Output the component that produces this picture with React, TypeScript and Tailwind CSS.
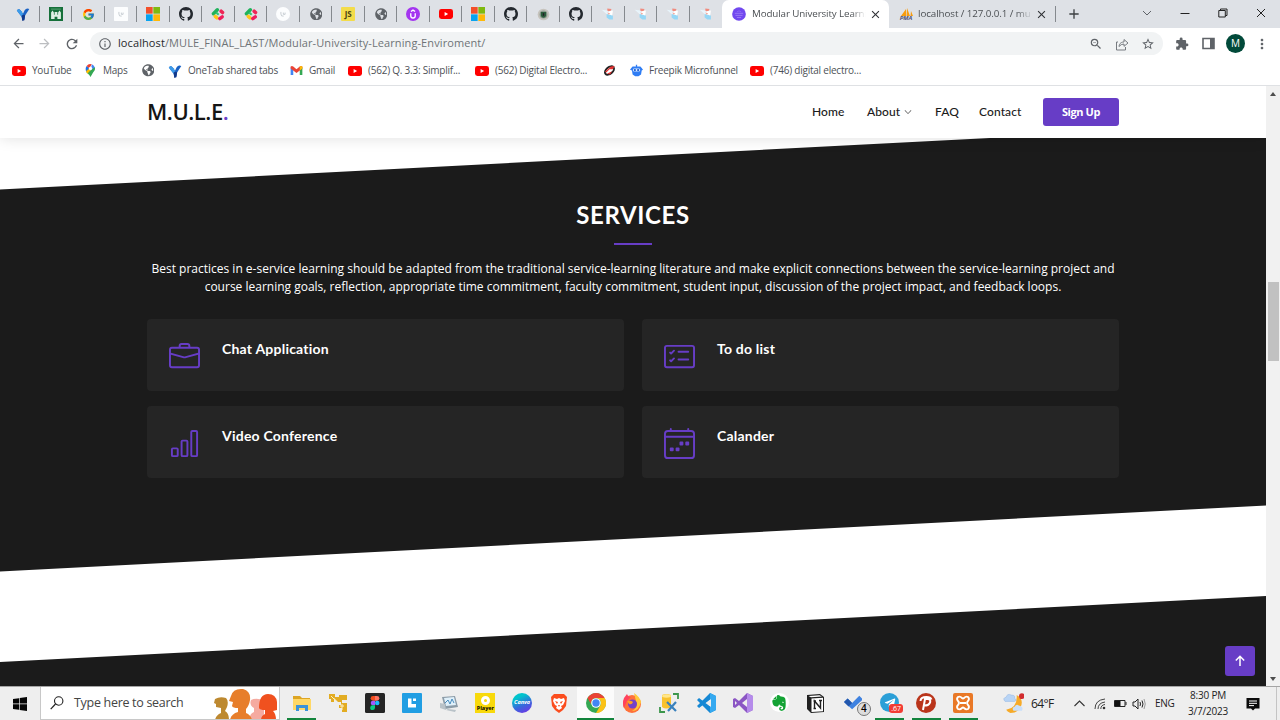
import React from "react";
import { BsBriefcase, BsCardChecklist, BsBarChart, BsCalendar4Week, BsChevronDown, BsGithub } from "react-icons/bs";
import { FcGoogle } from "react-icons/fc";
import { FaGlobeAmericas, FaEvernote, FaTelegramPlane } from "react-icons/fa";
import { MdZoomOut, MdStarBorder, MdExtension, MdOutlineInfo, MdArrowBack, MdArrowForward, MdRefresh, MdMoreVert, MdClose, MdAdd } from "react-icons/md";

const S = ({ s = 14, v = "0 0 20 20", children }: { s?: number; v?: string; children: React.ReactNode }) => (
  <svg width={s} height={s} viewBox={v} className="block shrink-0">{children}</svg>
);

const OneTab = () => (
  <S>
    <path d="M2 4c2-1.500 4-.5 5 1.500l3 4 2-4C13 3 16 1 19 3l-6 9-1 6-3 1-1-5-6-8z" fill="#1b62c4" />
    <path d="M1 5l3-2 4 3 2 4-2 4z" fill="#3d9be9" />
    <path d="M8 12l4-1 1 1-1 7-3 1z" fill="#12398a" />
  </S>
);
const Castle = () => (
  <S>
    <rect width="20" height="20" fill="#16703a" />
    <path d="M3 17V8l2-3 2 3v3h1V7h4v4h1V8l2-3 2 3v9h-5v-3H8v3z" fill="#dff0e4" />
    <path d="M3 3h14" stroke="#74b78c" />
  </S>
);
const Globe = () => <FaGlobeAmericas size={12.500} color="#5f6368" />;
const Faint = ({ round = false }: { round?: boolean }) => (
  <S>
    <rect width="20" height="20" rx={round ? 10 : 1} fill="#fcfdfe" />
    <path d="M7 7v3q0 4 4 3M10.500 8v2.500h2.500V8" stroke="#b4bcc3" fill="none" />
  </S>
);
const Microsoft = () => (
  <S>
    <path d="M0 0h9.500v9.500H0z" fill="#f3502b" /><path d="M10.500 0H20v9.500h-9.500z" fill="#7fba10" />
    <path d="M0 10.500h9.500V20H0z" fill="#08a3ef" /><path d="M10.500 10.500H20V20h-9.500z" fill="#feb909" />
  </S>
);
const Petals = () => (
  <S>
    <g strokeWidth="5" strokeLinecap="round">
      <path d="M3.500 9.500L9 4" stroke="#20b25c" /><path d="M14.500 6l2 2" stroke="#ee2656" />
      <path d="M6 13.500l2.500 2" stroke="#ffc61c" /><path d="M12.500 16.500l3.500-2.500" stroke="#f01d5c" />
    </g>
    <path d="M7.500 8l3.500 3" stroke="#31c871" strokeWidth="3" />
  </S>
);
const Js = () => (
  <span className="flex h-[14px] w-[14px] items-center justify-center rounded-[1px] bg-[#f3dc4b] text-[8px] font-bold text-[#4b4415]">JS</span>
);
const Udemy = () => (
  <S>
    <circle cx="10" cy="10" r="10" fill="#a435f0" />
    <path d="M6.800 9v3.500a3.200 3.200 0 006.400 0V9M7 6.500l3-2 3 2" stroke="#fff" strokeWidth="1.900" fill="none" />
  </S>
);
const YouTube = () => (
  <S v="0 0 20 20">
    <rect y="3" width="20" height="14" rx="3.500" fill="#f00" /><path d="M8 7l5 3-5 3z" fill="#fff" />
  </S>
);
const Emblem = () => (
  <S s={13}>
    <circle cx="10" cy="10" r="9" fill="#c6c3bd" /><circle cx="10" cy="10" r="6" fill="#8c9c8e" />
    <path d="M6 6h8v6q-1 3-4 3-3 0-4-3z" fill="#2b5b3a" /><path d="M9 8h2v4H9z" fill="#251d25" />
  </S>
);
const Bird = () => (
  <S>
    <path d="M1 4l8 1 3 4-3 2z" fill="#e8f4fb" /><path d="M8 10l9 2v6h-5l-4-3z" fill="#95d7f6" />
    <path d="M9 2l6 1-2 4-4-2z" fill="#f08b7e" /><path d="M11 6l6-1-1 7-6-2z" fill="#fff" /><path d="M9 8l4 1-2 2z" fill="#f3a99d" />
  </S>
);
const Mule = () => (
  <S>
    <circle cx="10" cy="10" r="9.800" fill="#7148ef" />
    <path d="M4 9h12M5 12h10M7 15h6" stroke="#a98df8" /><path d="M7 7l3-1.500L13 7" stroke="#9472f5" fill="none" />
  </S>
);
const Pma = () => (
  <span className="flex w-[14px] flex-col items-center">
    <svg width="13" height="8" viewBox="0 0 13 8"><path d="M1 8L6 1v7zM6.500 8L7 0l3 8zM10.500 8L11 3l2 5z" fill="#f89c0e" /></svg>
    <span className="text-[6px] font-bold italic leading-[5px] text-[#4f5379]">PMA</span>
  </span>
);

const pinned = [
  <OneTab />, <Castle />, <FcGoogle size={13} />, <Faint />, <Microsoft />, <BsGithub size={14} color="#24292f" />, <Petals />, <Petals />,
  <Faint round />, <Globe />, <Js />, <Globe />, <Udemy />, <YouTube />, <Microsoft />, <BsGithub size={14} color="#24292f" />, <Emblem />,
  <BsGithub size={14} color="#24292f" />, <Bird />, <Bird />, <Bird />, <Bird />,
];

const TabStrip = () => (
  <div className="flex h-[28px] items-stretch bg-[#dee1e6] pl-[7px] text-[9.800px]">
    {pinned.map((icon, i) => (
      <div key={i} className={`flex w-[32.500px] shrink-0 items-center justify-center ${i < 21 ? "bg-[linear-gradient(#85898e,#85898e)] bg-[length:1px_16px] bg-[position:right_6px] bg-no-repeat" : ""}`}>
        {icon}
      </div>
    ))}
    <div className="flex w-[167px] shrink-0 items-center rounded-t-[7px] bg-white pl-[10px]">
      <Mule />
      <span className="ml-[6px] w-[116px] whitespace-nowrap bg-[linear-gradient(90deg,#45494d_86%,#fff_98%)] bg-clip-text tracking-[-0.120px] text-transparent">Modular University Learni</span>
      <MdClose size={13} className="ml-px shrink-0 text-[#303236]" />
    </div>
    <div className="flex w-[167px] shrink-0 items-center bg-[linear-gradient(#85898e,#85898e)] bg-[length:1px_16px] bg-[position:right_6px] bg-no-repeat pl-[10px]">
      <Pma />
      <span className="ml-[5px] w-[117px] whitespace-nowrap bg-[linear-gradient(90deg,#45494d_84%,#dee1e6_98%)] bg-clip-text tracking-[-0.080px] text-transparent">localhost / 127.0.0.1 / mu</span>
      <MdClose size={13} className="ml-0 shrink-0 text-[#303236]" />
    </div>
    <div className="flex w-[36px] items-center justify-center"><MdAdd size={16} className="text-[#3c4043]" /></div>
    <div className="ml-auto flex items-center pb-[3px]">
      <div className="flex w-[38px] justify-center"><S s={10} v="0 0 10 10"><path d="M1 3l4 4 4-4" stroke="#5f6368" fill="none" /></S></div>
      <div className="flex w-[38px] justify-center"><S s={10} v="0 0 10 10"><path d="M0.500 5.500h9" stroke="#222" fill="none" /></S></div>
      <div className="flex w-[38px] justify-center"><S s={10} v="0 0 10 10"><path d="M.8 2.500h6.500v6.500H.8zM2.500 2.500V1h6.500v6.500H7.500" stroke="#222" fill="none" /></S></div>
      <div className="flex w-[38px] justify-center"><S s={10} v="0 0 10 10"><path d="M1 1l8 8M9 1L1 9" stroke="#222" fill="none" /></S></div>
    </div>
  </div>
);

const Toolbar = () => (
  <div className="flex h-[30px] items-center bg-white pl-[11px] pt-px text-[#5f6368]">
    <MdArrowBack size={15} />
    <MdArrowForward size={15} className="ml-[11px] text-[#bcbec1]" />
    <MdRefresh size={16} className="ml-[12px]" />
    <div className="ml-[10px] flex h-[23px] w-[1073px] items-center rounded-full bg-[#f1f3f4] pl-[8px] pr-[8px]">
      <MdOutlineInfo size={14} />
      <span className="ml-[6px] whitespace-nowrap text-[11px] tracking-[0.095px] text-[#6f7377]"><span className="text-[#26282b]">localhost</span>/MULE_FINAL_LAST/Modular-University-Learning-Enviroment/</span>
      <MdZoomOut size={14} className="ml-auto" />
      <span className="ml-[12px]">
        <S s={14} v="0 0 14 14"><path d="M3 5H1.500v8h9V10M4 9.500C4.500 6 6.500 5 9 5V2.500L13 6 9 9.300V7Q6 7 4 9.500z" stroke="#777b80" strokeWidth="1" fill="none" /></S>
      </span>
      <MdStarBorder size={14} className="ml-[12px]" />
    </div>
    <MdExtension size={14} className="ml-[12px]" />
    <span className="ml-[13px]"><S s={13} v="0 0 13 13"><path d="M1 1.500h11v10H1z" stroke="#5f6368" strokeWidth="1.600" fill="none" /><path d="M8 1h4v11H8z" fill="#5f6368" /></S></span>
    <span className="ml-[11px] flex h-[19px] w-[19px] items-center justify-center rounded-full bg-[#024a3a] text-[10px] text-white">M</span>
    <MdMoreVert size={16} className="ml-[9px]" />
  </div>
);

const Maps = () => (
  <S s={13} v="0 0 20 20">
    <path d="M4 3l6 5-6 5Q1 7 4 3z" fill="#1a73e8" /><path d="M4 3q3-4 8-2.500L8 7z" fill="#ea4335" />
    <path d="M12 .5q4 1.500 5 6l-7 6z" fill="#4285f4" /><path d="M4 13L17 5q1 4-3 8l-4 7q-2-4-6-7z" fill="#34a853" />
    <path d="M3 11l5-4 3 2-6 6z" fill="#fbbc04" /><circle cx="10" cy="7" r="2.600" fill="#fff" />
  </S>
);
const Gmail = () => (
  <S s={13} v="0 0 20 20">
    <path d="M1 5v12h4V9z" fill="#4285f4" /><path d="M19 5v12h-4V9z" fill="#34a853" />
    <path d="M1 7V4q2-2 4 0l5 4 5-4q2-2 4 0v3l-9 7z" fill="#ea4335" /><path d="M15 4q2-2 4 0v3l-4 3z" fill="#fbbc04" />
  </S>
);
const Swirl = () => (
  <S s={13} v="0 0 20 20">
    <ellipse cx="10" cy="10" rx="8" ry="5" transform="rotate(-40 10 10)" fill="#fff" stroke="#222" strokeWidth="3" />
    <path d="M3 12l9-8 6-1-3 5-5 0-5 5z" fill="#e23131" /><path d="M6 15l8-4-3 5z" fill="#e23131" />
  </S>
);
const Robot = () => (
  <S s={13} v="0 0 20 20">
    <path d="M9 1h2v3H9zM2 6l2-2h12l2 2 2 3-2 1-1 6-4 3H8l-4-3-1-6-3-1z" fill="#2f7df4" />
    <rect x="4.500" y="7" width="11" height="4.500" rx="2" fill="#d9e9ff" /><circle cx="7.500" cy="9.300" r="1.700" fill="#185bd0" /><circle cx="12.500" cy="9.300" r="1.700" fill="#185bd0" />
  </S>
);

const Mark = ({ icon, label, w }: { icon: React.ReactNode; label?: string; w: string }) => (
  <div className={`flex shrink-0 items-center gap-[6px] ${w}`}>
    <span className="flex w-[14px] justify-center">{icon}</span>
    {label && <span className="whitespace-nowrap">{label}</span>}
  </div>
);

const Bookmarks = () => (
  <div className="flex h-[28px] items-center border-b border-[#dfe1e4] bg-white pb-[2px] pl-[12px] text-[10px] tracking-[-0.230px] text-[#4d5156]">
    <Mark w="w-[71px]" icon={<YouTube />} label="YouTube" />
    <Mark w="w-[58px]" icon={<Maps />} label="Maps" />
    <Mark w="w-[27px]" icon={<Globe />} />
    <Mark w="w-[121px]" icon={<OneTab />} label="OneTab shared tabs" />
    <Mark w="w-[59px]" icon={<Gmail />} label="Gmail" />
    <Mark w="w-[127px]" icon={<YouTube />} label="(562) Q. 3.3: Simplif..." />
    <Mark w="w-[127px]" icon={<YouTube />} label="(562) Digital Electro..." />
    <Mark w="w-[27px]" icon={<Swirl />} />
    <Mark w="w-[121px]" icon={<Robot />} label="Freepik Microfunnel" />
    <Mark w="w-[120px]" icon={<YouTube />} label="(746) digital electro..." />
  </div>
);

const Header = () => (
  <header className="relative z-10 flex h-[52px] shrink-0 items-center bg-white pl-[147px] font-['Lato',sans-serif] text-[12px] font-medium tracking-[0.100px] text-[#1b1b1b] shadow-[0_0_14px_rgba(0,0,0,0.13)]">
    <h1 className="w-[665px] pb-[2px] font-['Open_Sans',sans-serif] text-[22px] font-semibold tracking-[-0.450px] text-[#151515]">M.U.L.E<span className="text-[#6a40c8]">.</span></h1>
    <a className="w-[55px]">Home</a>
    <a className="flex w-[68px] items-center gap-[4px]">About <BsChevronDown size={8} /></a>
    <a className="w-[44px]">FAQ</a>
    <a className="w-[64px]">Contact</a>
    <a className="flex h-[28px] w-[76px] items-center justify-center rounded-[3px] bg-[#673dc6] font-['Open_Sans',sans-serif] text-[11px] font-bold tracking-[-0.400px] text-white">Sign Up</a>
  </header>
);

const services = [
  { icon: <BsBriefcase size={31} />, name: "Chat Application" },
  { icon: <BsCardChecklist size={31} />, name: "To do list" },
  { icon: <BsBarChart size={31} />, name: "Video Conference" },
  { icon: <BsCalendar4Week size={31} />, name: "Calander" },
];

const Site = () => (
  <main className="relative flex w-[1266px] flex-col overflow-hidden bg-white">
    <Header />
    <section className="flex h-[434px] shrink-0 flex-col items-center bg-[#1b1b1b] pt-[61px] text-white [clip-path:polygon(0_51.500px,990px_0,100%_0,100%_367.500px,0_433.500px)]">
      <h2 className="font-['Lato',sans-serif] text-[24px] font-bold leading-[32px] tracking-[0.600px]">SERVICES</h2>
      <div className="mt-[12px] h-[2px] w-[38px] bg-[#673dc6]" />
      <p className="mt-[15px] whitespace-nowrap text-center font-['Open_Sans',sans-serif] text-[12px] leading-[18px]">
        Best practices in e-service learning should be adapted from the traditional service-learning literature and make explicit connections between the service-learning project and<br />
        course learning goals, reflection, appropriate time commitment, faculty commitment, student input, discussion of the project impact, and feedback loops.
      </p>
      <div className="mt-[23px] grid w-[972px] grid-cols-2 gap-x-[18px] gap-y-[15px]">
        {services.map((s) => (
          <div key={s.name} className="flex h-[72px] rounded-[4px] bg-[#252525] pl-[22px] pt-[21.500px] text-[#673dc6]">
            {s.icon}
            <h4 className="ml-[22px] font-['Lato',sans-serif] text-[14px] font-bold leading-[16px] tracking-[0.220px] text-white">{s.name}</h4>
          </div>
        ))}
      </div>
    </section>
    <section className="mt-[24px] h-[110px] shrink-0 bg-[#1b1b1b] [clip-path:polygon(0_66px,100%_0,100%_100%,0_100%)]" />
    <a className="absolute bottom-[10px] right-[11px] flex h-[30px] w-[30px] items-center justify-center rounded-[3px] bg-[#673dc6]">
      <S s={12} v="0 0 12 12"><path d="M6 11V1.500M1.800 5.500L6 1.300l4.200 4.200" stroke="#fff" strokeWidth="1.500" fill="none" /></S>
    </a>
  </main>
);

const Scrollbar = () => (
  <div className="flex w-[14px] flex-col items-center bg-[#f1f1f1]">
    <svg width="8" height="6" viewBox="0 0 8 6" className="mt-[5px]"><path d="M1 5l3-4 3 4z" fill="#4d4d4d" /></svg>
    <div className="mt-[185px] h-[79px] w-[11px] bg-[#c1c1c1]" />
    <svg width="8" height="6" viewBox="0 0 8 6" className="mb-[4px] mt-auto"><path d="M1 1l3 4 3-4z" fill="#4d4d4d" /></svg>
  </div>
);

const apps: { icon: React.ReactNode; state?: "open" | "active" }[] = [
  { state: "open", icon: <S><path d="M1 3h7l2 2h8v3H1z" fill="#dda523" /><path d="M1 6h18v11H1z" fill="#ffd866" /><path d="M4 18v-6h12v6h-3v-3H7v3z" fill="#3b93d9" /></S> },
  { icon: <S><path d="M1 1h6v3h4V2h8v5h-5v3h5v9h-5v-4h-3v-3h2V9h-3L6 5v4H3V6H1z" fill="#e2ac22" /><path d="M12 13h4M14 11v6M3 3l5 5" stroke="#fff0c1" /></S> },
  { icon: <S><rect width="20" height="20" rx="1.500" fill="#252525" /><path d="M10 3H8a2.300 2.300 0 000 4.700h2z" fill="#f24e1e" /><path d="M10 3h2a2.300 2.300 0 010 4.700h-2z" fill="#ff7262" /><path d="M10 7.700H8a2.300 2.300 0 000 4.600h2z" fill="#a259ff" /><circle cx="12.200" cy="10" r="2.300" fill="#1abcfe" /><path d="M10 12.300H8a2.400 2.400 0 102 2.400z" fill="#0acf83" /></S> },
  { icon: <S><rect width="20" height="20" rx="1" fill="#219ee3" /><path d="M6 5.500h3.500V11H14v3.500H6zM11 5.500h3V8h-3z" fill="#fff" /></S> },
  { icon: <S><path d="M3 4l13-1 3 11-13 2z" fill="#8c9ca8" /><path d="M5 5l10-1 2 8-10 1z" fill="#dff0fa" /><path d="M6 10l3-3 2 4 2-5 2 4" stroke="#498cbe" fill="none" /><path d="M1 10l5 1 1 6-6-2zM9 16l8 1-1 2-9-2z" fill="#b9c2c8" /></S> },
  { icon: <span className="flex h-[20px] w-[20px] flex-col items-center bg-[#f8d90b] pt-[3px]"><span className="h-[9px] w-[9px] rounded-full border-[3px] border-white" /><span className="text-[5.500px] font-bold leading-[7px] text-black">Player</span></span> },
  { icon: <span className="flex h-[20px] w-[20px] items-center justify-center rounded-full bg-[linear-gradient(155deg,#00c4cc_25%,#3767dc_60%,#7d2ae8)] text-[5.500px] font-bold italic text-white">Canva</span> },
  { icon: <S><path d="M5 1h10l3 3-1 9-3 4-4 3-4-3-3-4-1-9z" fill="#fb4d1e" /><path d="M5 5l3 1 2-1 2 1 3-1 1 3-2 4-2 1 1 2-3 2-3-2 1-2-2-1-2-4z" fill="#fff" /><path d="M6 8l3 1-1 2zM14 8l-3 1 1 2zM9 12h2l-1 2z" fill="#fb4d1e" /></S> },
  { state: "active", icon: <S><circle cx="10" cy="10" r="10" fill="#34a853" /><path d="M1.500 5A10 10 0 0118.700 5H10a5 5 0 00-4.500 7z" fill="#ea4335" /><path d="M18.700 5A10 10 0 0110 20l4.300-7.500A5 5 0 0010 5z" fill="#fbc116" /><circle cx="10" cy="10" r="4.800" fill="#fff" /><circle cx="10" cy="10" r="3.700" fill="#4285f4" /></S> },
  { icon: <S><circle cx="10" cy="11" r="9" fill="#ff7139" /><path d="M12 0q6 4 7 9-2 9-9 9 7-4 4-10z" fill="#ffc93c" /><path d="M2 5q3-4 3-4 1 3 4 3l-4 4-3 7q-2-5 0-10z" fill="#ff425c" /><circle cx="10.500" cy="11" r="4.500" fill="#7542c9" /><path d="M5 8q4-1 6 1-1 3-4 2z" fill="#ff9e27" /></S> },
  { icon: <S><path d="M3 2q4-2 9 0v12q-5 3-9 0z" fill="#f8c22e" /><ellipse cx="7.500" cy="3" rx="4.500" ry="1.700" fill="#ffe68b" /><path d="M14 1h5v5M1 14v5h5" stroke="#3c964c" strokeWidth="1.800" fill="none" /><path d="M8 9l9 9M17 9l-8 9" stroke="#3a82bd" strokeWidth="2.200" /></S> },
  { icon: <S><path d="M14 0l6 3v14l-6 3L1 7l2-2 12 9V6L3 15l-2-2z" fill="#1688d4" /><path d="M14 0l6 3v14l-6 3z" fill="#35a9f0" /><path d="M15 6v8l-5-4z" fill="#eee" /></S> },
  { icon: <S><path d="M14 0l6 3v14l-6 3L6 12l-4 3-2-1V6l2-1 4 3z" fill="#8b56c4" /><path d="M14 0l6 3v14l-6 3z" fill="#b58bea" /><path d="M14 6v8l-5-4zM2 8v4l2-2z" fill="#eee" /></S> },
  { icon: <span className="flex h-[19px] w-[19px] items-center justify-center rounded-full bg-white"><FaEvernote size={14} color="#14a335" /></span> },
  { icon: <S><path d="M1 2l13-1 4 3v15l-13 1-4-4z" fill="#202020" /><path d="M5.500 5.500L17 4.700v13.500l-11.500.8zM2.500 3l11-.8L16 3.500 5 4.300z" fill="#fff" /><path d="M8.500 15.500V8l6 7V7.500M7.500 8H10M13 7.500h3M7.500 15.500h2.500" stroke="#222" strokeWidth="1.400" fill="none" /></S> },
  { icon: <span className="relative"><S><path d="M0 9l4-4 5 5L17 2l4 4L9 17z" fill="#3f82e0" /><path d="M0 9l4-4 5 5-4 4z" fill="#2257ad" /></S><span className="absolute left-[13px] top-[8px] flex h-[14px] w-[14px] items-center justify-center rounded-full border border-[#777] bg-[#ddd] text-[10px] font-semibold text-black">4</span></span> },
  { state: "open", icon: <span className="relative"><span className="flex h-[19px] w-[19px] items-center justify-center rounded-full bg-[#2b9fd7]"><FaTelegramPlane size={12} color="#fff" /></span><span className="absolute left-[9px] top-[11px] rounded-[3px] bg-[#f23c34] px-[2px] text-[7px] leading-[9px] text-white">.67</span></span> },
  { state: "open", icon: <S><circle cx="10" cy="10" r="10" fill="#ba351b" /><path d="M7 17L9 6h3.500q3 1 1 4.500-1 2-5 2M4.500 8q0-4 6-4 4 0 5 2.500" stroke="#fff" strokeWidth="2" fill="none" /></S> },
  { state: "open", icon: <S><rect width="20" height="20" rx="2" fill="#e97826" /><path d="M5 4q2-1 4 1 1 1 2 0 2-2 4-1 2 2 0 4-2 2 0 4 2 2 0 4-2 1-4-1-1-1-2 0-2 2-4 1-2-2 0-4 2-2 0-4-2-2 0-4z" fill="none" stroke="#fff" strokeWidth="1.800" /><path d="M7 10h6" stroke="#fff" strokeWidth="2" /></S> },
];

const Taskbar = () => (
  <footer className="flex h-[34px] shrink-0 items-stretch border-t border-[#a5a5a5] bg-[#eee] text-[#222]">
    <div className="flex w-[40px] shrink-0 items-center justify-center">
      <S s={14} v="0 0 14 14"><path d="M0 2l6-.8v5.400H0zM6.700 1L14 0v6.600H6.700zM0 7.300h6v5.400L0 12zM6.700 7.300H14V14l-7.300-1z" fill="#050505" /></S>
    </div>
    <div className="flex w-[240px] shrink-0 items-center overflow-hidden border-x border-b border-[#c8c8c8] bg-white pl-[9px]">
      <S s={14} v="0 0 14 14"><circle cx="8.700" cy="5" r="4.200" fill="none" stroke="#222" strokeWidth="1.100" /><path d="M5.500 8L.7 13.200" stroke="#222" strokeWidth="1.200" /></S>
      <span className="ml-[10px] w-[140px] whitespace-nowrap text-[12.500px] tracking-[-0.300px] text-[#444]">Type here to search</span>
      <svg width="66" height="33" viewBox="0 0 66 33" className="shrink-0">
        <path d="M2 33q1-5 6-7l0-5-5-1 0-3-2-1 1-4q5-3 11-1 3 3 1 9l-2 4q4 2 4 9z" fill="#bd8930" />
        <path d="M37 33q-1-6 4-8v-4q-5-3-3-8 6-3 13 1v19z" fill="#f5aaa0" />
        <path d="M17 33q1-6 8-8v-4q-5 0-6-2l1-4-4-1 2-5Q20 1 30 2q8 2 7 11-1 6-4 9l0 4q5 2 6 7z" fill="#e77e2b" />
        <path d="M48 33q0-4 4-6v-4q-5 0-6-2Q46 7 55 7q8 0 9 8v8l-4 1q3 3 3 9z" fill="#f0511f" />
      </svg>
    </div>
    <div className="flex w-[700px] shrink-0 pl-[3.250px]">
      {apps.map((a, i) => (
        <div key={i} className={`flex w-[36.750px] shrink-0 flex-col items-center ${a.state === "active" ? "bg-[#fbfbfb]" : ""}`}>
          <div className="flex flex-1 items-center justify-center [&>svg]:h-[20px] [&>svg]:w-[20px] [&>span>svg]:h-[18px] [&>span>svg]:w-[18px]">{a.icon}</div>
          <div className={a.state === "active" ? "h-[2px] w-full bg-[#12843c]" : a.state ? "h-[2px] w-[29px] bg-[#12843c]" : "h-[2px]"} />
        </div>
      ))}
    </div>
    <div className="flex flex-1 items-center text-[10px]">
      <div className="ml-[23px] w-[28px]">
        <S s={21}><path d="M13 2q7 4 4 11-3 6-10 6-3-1-4-3 11-2 10-14z" fill="#f6aa28" /><path d="M2 8q-3-3 1-4 1-4 5-2 4 0 3 3 3 2 0 3z" fill="#b8d4f5" stroke="#8fb5e5" strokeWidth=".5" /><path d="M10 17q-2-3 1-4 2-3 4-1 5 1 3 5z" fill="#c9dffa" /><circle cx="18" cy="3" r="2.700" fill="#d12b2f" /></S>
      </div>
      <span className="w-[43px] text-[12px] tracking-[-0.600px]">64°F</span>
      <span className="w-[20px]"><S s={11} v="0 0 11 11"><path d="M.5 8l5-5 5 5" stroke="#333" strokeWidth="1.100" fill="none" /></S></span>
      <span className="w-[20px]"><S s={12} v="0 0 12 12"><path d="M1 11Q1 2 11 1M4 11q0-6 7-7M6.800 11q0-4 4.200-4.500" stroke="#444" fill="none" /><circle cx="10" cy="10" r="1.300" fill="#333" /></S></span>
      <span className="w-[18px]"><S s={13} v="0 0 13 13"><path d="M.5 3.500h10.500v6H.5zM12 5v3" stroke="#222" fill="none" /><path d="M1 4h5.500v5H1z" fill="#111" /></S></span>
      <span className="w-[23px]"><S s={14} v="0 0 14 14"><path d="M1 5h2l3-3v10L3 9H1zM8 5q1 2 0 4M10 3.500q2 3.500 0 7" stroke="#222" fill="none" /><path d="M12 2q2.500 5 0 10" stroke="#999" fill="none" /></S></span>
      <span className="w-[27px] text-[10px] tracking-[-0.300px]">ENG</span>
      <span className="w-[52px] text-center text-[10px] leading-[15.500px] tracking-[-0.200px]">8:30 PM<br />3/7/2023</span>
      <span className="ml-[12px]"><S s={14} v="0 0 14 14"><path d="M.5 1h13v10.500H9L7 13.500 5 11.500H.5z" fill="#0b0b0b" /><path d="M3 4h8M3 6.300h8M3 8.600h5" stroke="#fff" /></S></span>
      <span className="ml-auto mr-[3px] h-full w-px bg-[#c4c4c4]" />
    </div>
  </footer>
);

export default function App() {
  return (
    <div className="flex h-[720px] w-[1280px] flex-col overflow-hidden bg-white font-['Open_Sans',sans-serif]">
      <TabStrip />
      <Toolbar />
      <Bookmarks />
      <div className="flex min-h-0 flex-1"><Site /><Scrollbar /></div>
      <Taskbar />
    </div>
  );
}
